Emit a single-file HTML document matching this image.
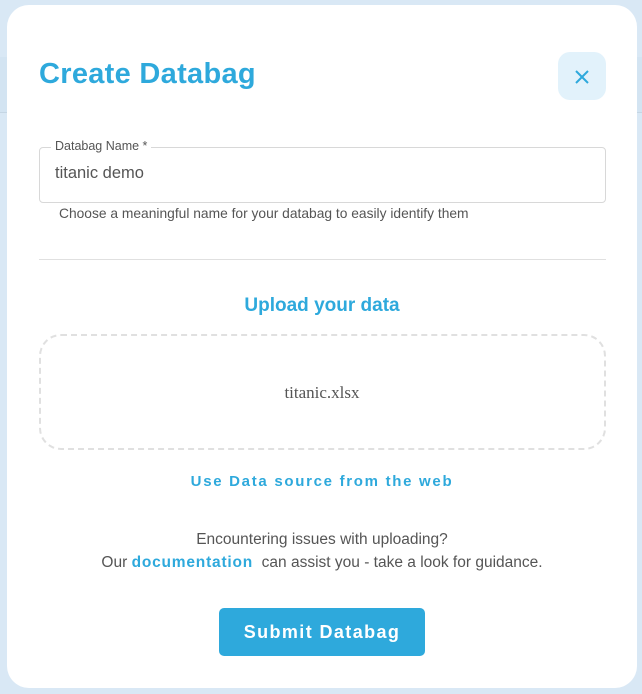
<!DOCTYPE html>
<html><head><meta charset="utf-8"><style>
*{margin:0;padding:0;box-sizing:border-box}
body{width:642px;height:694px;background:#d9e8f5;position:relative;overflow:hidden;font-family:"Liberation Sans",sans-serif}
.band{position:absolute;left:0;top:57px;width:642px;height:56px;background:#d3e4f2;border-bottom:1px solid #c5d6e4}
.modal{position:absolute;left:7px;top:5px;width:630px;height:683px;background:#fff;border-radius:22px}
h1{position:absolute;left:32px;top:53px;font-size:29px;font-weight:bold;color:#2ea9dc;letter-spacing:0.3px}
.close{position:absolute;left:551px;top:47px;width:48px;height:48px;border-radius:12px;background:#e2f2fb}
.field{position:absolute;left:32px;top:142px;width:567px;height:56px;border:1px solid #d8d8d8;border-radius:4px}
.lbl{position:absolute;left:11px;top:-9px;background:#fff;padding:0 4px;font-size:12.5px;color:#555}
.val{position:absolute;left:15px;top:16px;font-size:16.5px;color:#555}
.help{position:absolute;left:52px;top:201px;font-size:13.8px;color:#555}
.hr{position:absolute;left:32px;top:254px;width:567px;height:1px;background:#e0e0e0}
.up{position:absolute;left:0;width:630px;top:290px;text-align:center;font-size:19px;font-weight:bold;color:#2ea9dc}
.drop{position:absolute;left:32px;top:329px;width:567px;height:116px;border:2px dashed #e0e0e0;border-radius:22px}
.file{position:absolute;left:0;width:630px;top:378px;text-align:center;font-family:"Liberation Serif",serif;font-size:17px;color:#555}
.web{position:absolute;left:0;width:630px;top:468px;text-align:center;font-size:15px;font-weight:bold;color:#2ea9dc;letter-spacing:1.7px}
.t{position:absolute;left:0;width:630px;text-align:center;font-size:15.5px;color:#555}
.t b{color:#2ea9dc;letter-spacing:0.8px}
.btn{position:absolute;left:212px;top:603px;width:206px;height:48px;background:#2ea9dc;border-radius:5px;color:#fff;font-weight:bold;font-size:18px;text-align:center;line-height:48px;letter-spacing:1.4px}
</style></head><body>
<div class="band"></div>
<div class="modal">
<h1>Create Databag</h1>
<div class="close"><svg width="48" height="48" viewBox="0 0 48 48"><path d="M18 19L30 31M30 19L18 31" stroke="#2ea9dc" stroke-width="2" fill="none"/></svg></div>
<div class="field"><span class="lbl">Databag Name *</span><span class="val">titanic demo</span></div>
<div class="help">Choose a meaningful name for your databag to easily identify them</div>
<div class="hr"></div>
<div class="up">Upload your data</div>
<div class="drop"></div>
<div class="file">titanic.xlsx</div>
<div class="web">Use Data source from the web</div>
<div class="t" style="top:526px">Encountering issues with uploading?</div>
<div class="t" style="top:549px">Our <b>documentation</b> &nbsp;can assist you - take a look for guidance.</div>
<div class="btn">Submit Databag</div>
</div>
</body></html>
